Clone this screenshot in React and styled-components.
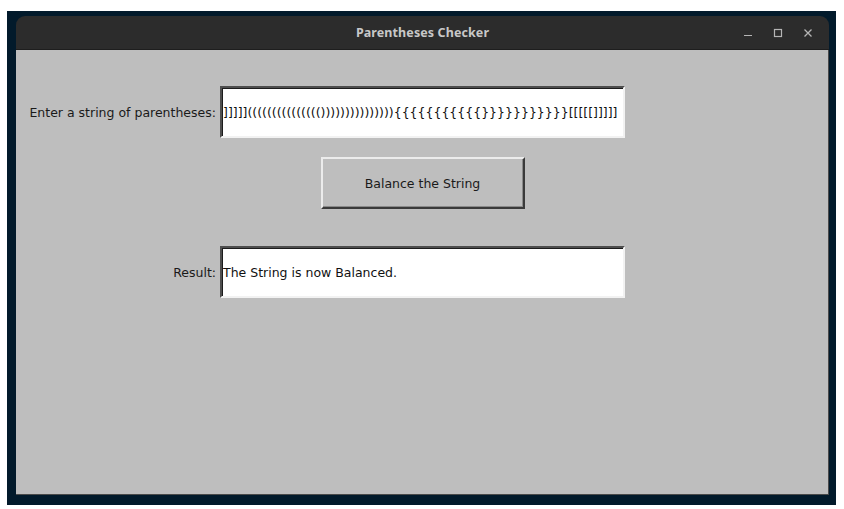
import React from 'react';
import styled, { createGlobalStyle } from 'styled-components';

const GlobalStyle = createGlobalStyle`
  html, body {
    margin: 0;
    padding: 0;
    background: #ffffff;
  }
  body {
    width: 844px;
    height: 509px;
    overflow: hidden;
  }
`;

const Frame = styled.div`
  margin: 11px 8px 0 7px;
  padding: 5px 7px 10px 9px;
  height: 479px;
  background: #021a2b;
`;

const Window = styled.div`
  display: flex;
  flex-direction: column;
  height: 100%;
  border-radius: 9px 9px 0 0;
  overflow: hidden;
`;

const TitleBar = styled.div`
  position: relative;
  height: 34px;
  flex: none;
  display: flex;
  align-items: center;
  justify-content: center;
  background: #2c2c2c;
  border-bottom: 1px solid #1e1e1e;
  box-sizing: border-box;
`;

const Title = styled.span`
  font-family: "Noto Sans", "DejaVu Sans", sans-serif;
  font-weight: 700;
  font-size: 12.5px;
  color: #c8c8c8;
  letter-spacing: 0.1px;
`;

const Controls = styled.div`
  position: absolute;
  right: 6px;
  top: 0;
  height: 100%;
  display: flex;
  align-items: center;
`;

const ControlButton = styled.div`
  width: 30px;
  height: 100%;
  display: flex;
  align-items: center;
  justify-content: center;
  color: #b5b5b5;
`;

const Content = styled.div`
  flex: 1;
  background: #bebebe;
  border-right: 1px solid #4a4a4a;
  border-bottom: 1px solid #4a4a4a;
  display: grid;
  grid-template-columns: 200px 405px;
  column-gap: 4px;
  align-content: start;
  padding-top: 36px;
`;

const Label = styled.label`
  align-self: center;
  justify-self: end;
  font-family: "DejaVu Sans", sans-serif;
  font-size: 12.5px;
  line-height: 15px;
  color: #1a1a1a;
  margin-top: ${p => p.$offset || 0}px;
`;

const Field = styled.input`
  box-sizing: border-box;
  width: 405px;
  height: 52px;
  margin: 0;
  margin-top: ${p => p.$offset || 0}px;
  padding: 0 0 0 1px;
  background: #ffffff;
  border: 2px solid;
  border-color: #4e4e4e #f2f2f2 #f2f2f2 #4e4e4e;
  box-shadow: inset 1px 1px 0 #1c1c1c;
  font-family: "DejaVu Sans", sans-serif;
  font-size: 12.5px;
  color: #111;
  outline: none;
`;

const Button = styled.button`
  grid-column: 2;
  justify-self: center;
  box-sizing: border-box;
  width: 204px;
  height: 52px;
  margin-top: 19px;
  background: #bebebe;
  border: 2px solid;
  border-color: #ececec #3a3a3a #3a3a3a #ececec;
  box-shadow: inset -1px -1px 0 #8a8a8a;
  font-family: "DejaVu Sans", sans-serif;
  font-size: 12.5px;
  color: #1a1a1a;
  padding: 0;
`;

const Minimize = () => (
  <svg width="10" height="10" viewBox="0 0 10 10">
    <path d="M1 7.5h8" stroke="currentColor" strokeWidth="1.2" />
  </svg>
);

const Maximize = () => (
  <svg width="10" height="10" viewBox="0 0 10 10">
    <rect x="1.5" y="1.5" width="7" height="7" fill="none" stroke="currentColor" strokeWidth="1.2" />
  </svg>
);

const Close = () => (
  <svg width="10" height="10" viewBox="0 0 10 10">
    <path d="M1.5 1.5l7 7M8.5 1.5l-7 7" stroke="currentColor" strokeWidth="1.3" />
  </svg>
);

const input =
  ']]]]]' +
  '('.repeat(15) +
  ')'.repeat(15) +
  '{'.repeat(11) +
  '}'.repeat(11) +
  '['.repeat(5) +
  ']'.repeat(5);

const App = () => (
  <>
    <GlobalStyle />
    <Frame>
      <Window>
        <TitleBar>
          <Title>Parentheses Checker</Title>
          <Controls>
            <ControlButton><Minimize /></ControlButton>
            <ControlButton><Maximize /></ControlButton>
            <ControlButton><Close /></ControlButton>
          </Controls>
        </TitleBar>
        <Content>
          <Label>Enter a string of parentheses:</Label>
          <Field readOnly value={input} />
          <Button>Balance the String</Button>
          <Label $offset={37}>Result:</Label>
          <Field $offset={37} readOnly value="The String is now Balanced." />
        </Content>
      </Window>
    </Frame>
  </>
);

export default App;
